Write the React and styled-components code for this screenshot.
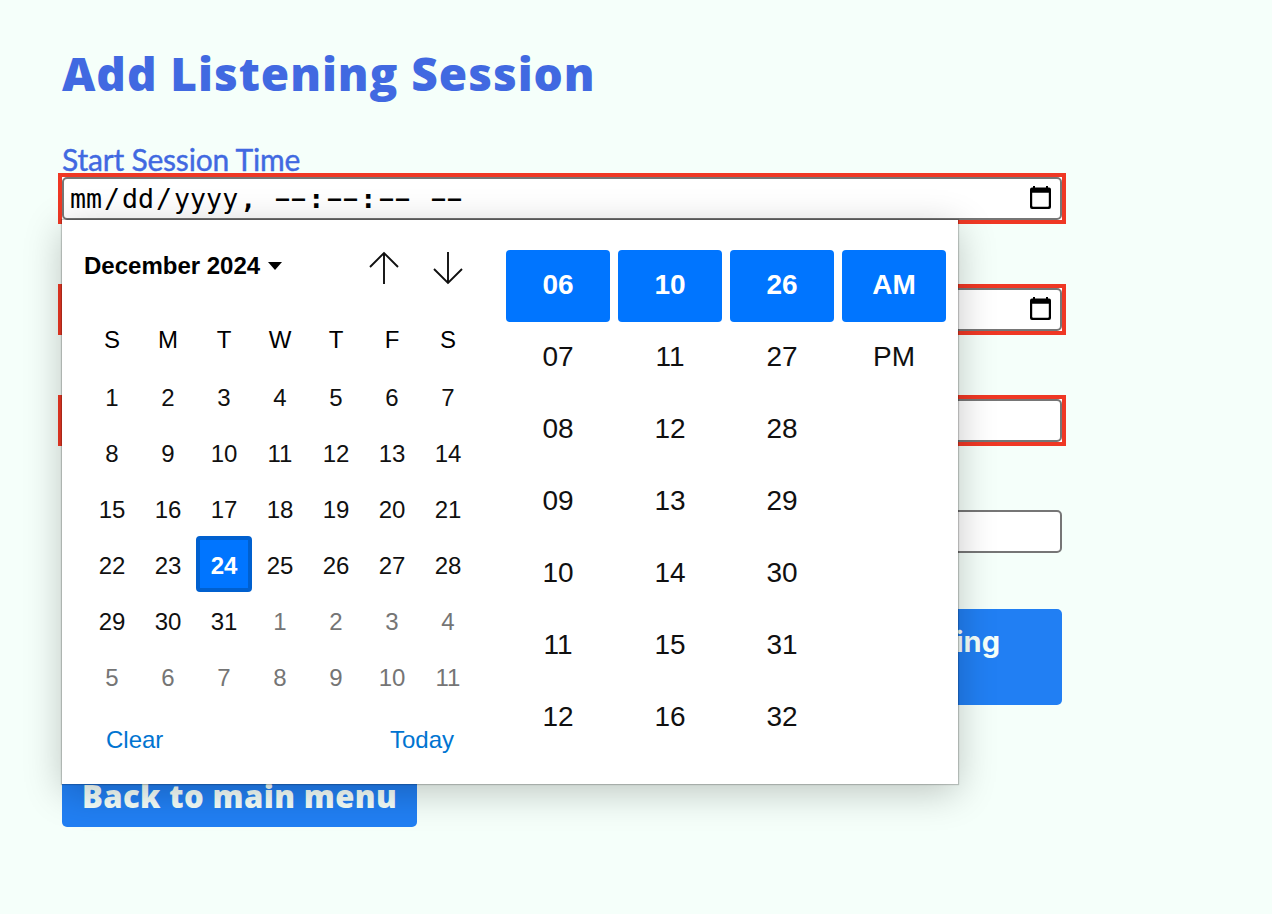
import React from "react";
import styled, { createGlobalStyle } from "styled-components";

const GlobalStyle = createGlobalStyle`
  * { box-sizing: border-box; }
  body { margin: 0; background: #f5fffa; overflow: hidden; font-family: "Gill Sans", Lato, sans-serif; }
  button { font: inherit; border: 0; padding: 0; background: none; }
`;

const Page = styled.main`
  width: 1272px;
  height: 914px;
  padding: 45px 0 0 62px;
  overflow: hidden;
`;

const Title = styled.h1`
  margin: 0;
  height: 56px;
  line-height: 56px;
  font-family: "Gill Sans", "Open Sans", sans-serif;
  font-size: 46px;
  font-weight: 800;
  letter-spacing: 0.95px;
  color: #4169e1;
  white-space: nowrap;
`;

const Form = styled.form`
  width: 1000px;
  margin-top: 42px;
`;

const Field = styled.div`
  position: relative;
  height: 77px;
  margin-bottom: 34px;
`;

const Label = styled.label`
  display: block;
  height: 34px;
  line-height: 32px;
  font-size: 30px;
  letter-spacing: -0.2px;
  color: #4169e1;
  -webkit-text-stroke: 0.4px #4169e1;
  white-space: nowrap;
`;

const InputBox = styled.div`
  display: flex;
  align-items: center;
  justify-content: space-between;
  height: 43px;
  padding: 0 9px 0 4px;
  background: #fff;
  border: 2px solid #767676;
  border-radius: 5px;
`;

const InvalidFrame = styled.div`
  margin: 0 -4px;
  position: relative;
  top: -4px;
  border: 4px solid #ef3824;
  background: #fff;
`;

const DateText = styled.div`
  display: flex;
  font: 26.6px/36px "DejaVu Sans Mono", monospace;
  color: #000;
  white-space: pre;
`;

const Part = styled.span`
  padding: 0 2px;
`;

const Colon = styled.span`
  font-weight: 700;
`;

const Dashes = styled.span`
  display: flex;
  width: 36px;
  padding: 0 2px;
`;

const Dash = styled.span`
  width: 16px;
  font-family: Roboto, sans-serif;
  font-weight: 500;
  span {
    display: inline-block;
    transform: scaleX(1.9);
    transform-origin: left;
  }
`;

const SubmitButton = styled.button`
  display: block;
  width: 355px;
  height: 96px;
  margin: 56px 0 0 auto;
  padding: 0 62px 30px 20px;
  border-radius: 5px;
  background: #217ff3;
  color: #f5fffa;
  font: 700 29px/66px Inter, sans-serif;
  white-space: nowrap;
  text-align: right;
`;

const BackButton = styled.button`
  display: block;
  width: 355px;
  height: 62px;
  margin-top: 60px;
  border-radius: 5px;
  background: #217ff3;
  color: #f5fffa;
  font-family: "Gill Sans", "Open Sans", sans-serif;
  font-size: 31px;
  font-weight: 800;
  line-height: 62px;
  letter-spacing: 0.4px;
  white-space: nowrap;
`;

const Picker = styled.div`
  position: absolute;
  z-index: 5;
  left: 0;
  top: 77px;
  width: 896px;
  height: 564px;
  display: flex;
  background: #fff;
  box-shadow: 0 0 1px 1px rgba(0, 0, 0, 0.2), 0 8px 36px rgba(0, 0, 0, 0.23);
  font-family: "Liberation Sans", Arial, sans-serif;
  color: #101010;
`;

const Calendar = styled.section`
  width: 444px;
  padding: 22px 30px 0 22px;
`;

const MonthBar = styled.div`
  display: flex;
  align-items: center;
  height: 50px;
  padding-right: 12px;
`;

const Month = styled.div`
  display: flex;
  align-items: center;
  gap: 8px;
  flex: 1;
  font-size: 24px;
  font-weight: 700;
  color: #000;
  white-space: nowrap;
  padding-bottom: 2px;
`;

const ArrowButton = styled.button`
  width: 32px;
  height: 34px;
  margin-top: 2px;
  margin-left: ${(p) => p.$gap}px;
  svg { display: block; }
`;

const Days = styled.div`
  display: grid;
  grid-template-columns: repeat(7, 56px);
  grid-template-rows: 58px repeat(6, 56px);
  margin-top: 18px;
`;

const Day = styled.div`
  display: flex;
  align-items: center;
  justify-content: center;
  padding-top: ${(p) => (p.$head ? 1 : 4)}px;
  font-size: 24px;
  color: ${(p) => (p.$muted ? "#757575" : "#101010")};
  ${(p) => p.$head && "color: #000;"}
  ${(p) => p.$selected && `
    background: #0075ff;
    border: 4px solid #0060cf;
    border-radius: 4px;
    font-weight: 700;
    color: #fff;
  `}
`;

const Actions = styled.div`
  display: flex;
  justify-content: space-between;
  margin-top: 22px;
  padding: 0 22px;
  font-size: 24px;
  line-height: 28px;
  color: #0074d1;
`;

const Times = styled.section`
  display: flex;
  gap: 8px;
  padding-top: 30px;
`;

const TimeCell = styled.div`
  display: flex;
  align-items: center;
  justify-content: center;
  width: 104px;
  height: 72px;
  padding-bottom: 2px;
  font-size: 28px;
  border-radius: 4px;
  font-weight: ${(p) => (p.$selected ? 700 : 400)};
  color: ${(p) => (p.$selected ? "#fff" : "#101010")};
  background: ${(p) => (p.$selected ? "#0075ff" : "transparent")};
`;

const IconSvg = styled.svg`
  display: block;
  margin-bottom: 2px;
`;

const CalendarIcon = () => (
  <IconSvg width="21" height="23" viewBox="0 0 21 23">
    <path fillRule="evenodd" d="M3 0h2v1.5h11V0h2v1.5h1q2 0 2 2V21q0 2-2 2H2q-2 0-2-2V3.500q0-2 2-2h1zM2.200 6.800v13q0 1 1 1h14.600q1 0 1-1v-13z" />
  </IconSvg>
);

const Arrow = ({ down }) => (
  <svg width="32" height="34" viewBox="0 0 32 34" fill="none" stroke="#101010" strokeWidth="1.9">
    <path d={down ? "M16 1v31M2 18l14 14 14-14" : "M16 33V2M2 16L16 2l14 14"} />
  </svg>
);

const Pair = () => (
  <Dashes>
    <Dash><span>-</span></Dash>
    <Dash><span>-</span></Dash>
  </Dashes>
);

const DatePlaceholder = () => (
  <DateText>
    <Part>mm</Part>/<Part>dd</Part>/<Part>yyyy</Part>
    <Colon>{", "}</Colon>
    <Pair /><Colon>:</Colon><Pair /><Colon>:</Colon><Pair />
    <span>{" "}</span>
    <Pair />
  </DateText>
);

const weekdays = ["S", "M", "T", "W", "T", "F", "S"];
const days = Array.from({ length: 42 }, (_, i) => ({ n: i < 31 ? i + 1 : i - 30, muted: i > 30 }));
const range = (start) => Array.from({ length: 7 }, (_, i) => String(start + i).padStart(2, "0"));
const timeColumns = [range(6), range(10), range(26), ["AM", "PM"]];

const DateTimePicker = () => (
  <Picker>
    <Calendar>
      <MonthBar>
        <Month>
          December 2024
          <svg width="14" height="8" viewBox="0 0 14 8"><path d="M0 0h14L7 8z" /></svg>
        </Month>
        <ArrowButton type="button" aria-label="Previous month" $gap={0}><Arrow /></ArrowButton>
        <ArrowButton type="button" aria-label="Next month" $gap={32}><Arrow down /></ArrowButton>
      </MonthBar>
      <Days>
        {weekdays.map((d, i) => <Day key={`h${i}`} $head>{d}</Day>)}
        {days.map((d, i) => (
          <Day key={i} $muted={d.muted} $selected={i === 23}>{d.n}</Day>
        ))}
      </Days>
      <Actions><span>Clear</span><span>Today</span></Actions>
    </Calendar>
    <Times>
      {timeColumns.map((col, i) => (
        <div key={i}>
          {col.map((v, j) => <TimeCell key={v} $selected={j === 0}>{v}</TimeCell>)}
        </div>
      ))}
    </Times>
  </Picker>
);

export default function App() {
  return (
    <Page>
      <GlobalStyle />
      <Title>Add Listening Session</Title>
      <Form>
        <Field>
          <Label>Start Session Time</Label>
          <InvalidFrame><InputBox><DatePlaceholder /><CalendarIcon /></InputBox></InvalidFrame>
          <DateTimePicker />
        </Field>
        <Field>
          <Label />
          <InvalidFrame><InputBox><span /><CalendarIcon /></InputBox></InvalidFrame>
        </Field>
        <Field>
          <Label />
          <InvalidFrame><InputBox /></InvalidFrame>
        </Field>
        <Field>
          <Label />
          <InputBox />
        </Field>
        <SubmitButton type="button">Add Listening</SubmitButton>
      </Form>
      <BackButton type="button">Back to main menu</BackButton>
    </Page>
  );
}
